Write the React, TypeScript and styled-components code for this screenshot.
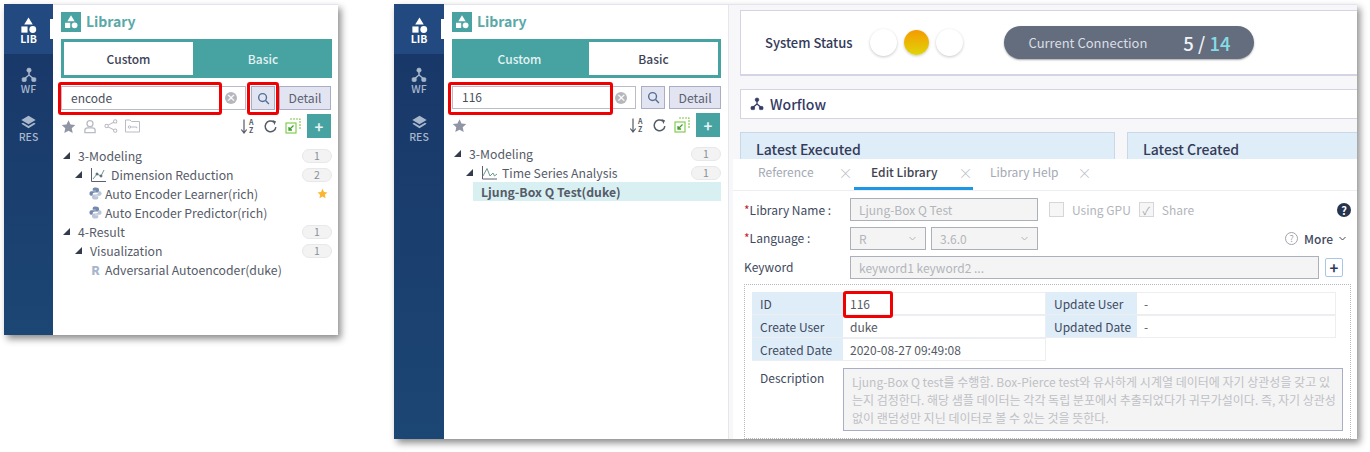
import * as React from 'react';
import styled, { createGlobalStyle } from 'styled-components';

const GlobalStyle = createGlobalStyle`
  html, body { margin: 0; padding: 0; background: #fff; }
  body { font-family: 'Noto Sans CJK KR', 'Noto Sans', sans-serif; color: #4a4f5c; overflow: hidden; }
  * { box-sizing: border-box; }
`;

const Page = styled.div`
  width: 1370px;
  height: 452px;
  padding: 4px 4px 0 4px;
  display: flex;
  align-items: flex-start;
  gap: 56px;
`;

const Shot = styled.div<{ $w: number; $h: number }>`
  position: relative;
  width: ${p => p.$w}px;
  height: ${p => p.$h}px;
  display: flex;
  flex: none;
  background: #fff;
  box-shadow: 3px 4px 7px rgba(0, 0, 0, 0.45);
`;

const Rail = styled.div<{ $w: number }>`
  width: ${p => p.$w}px;
  flex: none;
  background: linear-gradient(180deg, #183667 0%, #1c4674 100%);
  display: flex;
  flex-direction: column;
`;

const RailItem = styled.div<{ $active?: boolean }>`
  position: relative;
  height: ${p => (p.$active ? 50 : 48)}px;
  padding-top: ${p => (p.$active ? 12 : 13)}px;
  display: flex;
  flex-direction: column;
  align-items: center;
  font-size: 10.5px;
  line-height: 11px;
  font-weight: ${p => (p.$active ? 700 : 500)};
  color: ${p => (p.$active ? '#fff' : '#a9b7cc')};
  background: ${p => (p.$active ? '#224a80' : 'transparent')};
  svg { margin-bottom: ${p => (p.$active ? -2 : 0)}px; }
  &::after {
    content: '';
    display: ${p => (p.$active ? 'block' : 'none')};
    position: absolute;
    right: 0;
    top: 15px;
    width: 3px;
    height: 20px;
    background: #fff;
  }
`;

const LibPanel = styled.div<{ $w: number; $pr: number }>`
  width: ${p => p.$w}px;
  flex: none;
  padding: 7px ${p => p.$pr}px 0 8px;
  background: #fff;
  border-top: 1px solid #e3e5ee;
`;

const TitleRow = styled.div`
  display: flex;
  align-items: center;
  gap: 5px;
  height: 20px;
`;

const TitleIcon = styled.span`
  width: 20px;
  height: 20px;
  display: flex;
  align-items: center;
  justify-content: center;
  background: #4aa3a3;
`;

const TitleText = styled.span`
  font-size: 14px;
  line-height: 18px;
  margin-top: -2px;
  font-weight: 700;
  color: #5aa8a8;
`;

const Tabs = styled.div`
  margin-top: 7px;
  height: 39px;
  display: flex;
  border: 3px solid #47a2a2;
  background: #47a2a2;
`;

const Tab = styled.div<{ $on: boolean; $w: number; $nudge: number }>`
  width: ${p => p.$w}px;
  flex: ${p => (p.$w ? 'none' : '1')};
  display: flex;
  align-items: center;
  justify-content: center;
  padding: 0 ${p => Math.max(-p.$nudge, 0)}px 0 ${p => Math.max(p.$nudge, 0)}px;
  font-size: 12px;
  font-weight: 500;
  color: ${p => (p.$on ? '#3d4356' : '#e4f2f2')};
  background: ${p => (p.$on ? '#fff' : '#47a2a2')};
`;

const SearchRow = styled.div<{ $h: number }>`
  margin-top: 8px;
  height: ${p => p.$h}px;
  display: flex;
  gap: 4px;
`;

const SearchBox = styled.div`
  width: 185px;
  margin-right: 1px;
  display: flex;
  align-items: center;
  justify-content: space-between;
  padding: 0 8px 2px 9px;
  border: 1px solid #b8bcc9;
  font-size: 12px;
  color: #4a4f5c;
`;

const ClearDot = styled.span`
  width: 12px;
  height: 12px;
  margin-top: 2px;
  border-radius: 50%;
  background: #b5b7bd;
  color: #fff;
  font-size: 10px;
  line-height: 12px;
  font-weight: 700;
  text-align: center;
`;

const IconBtn = styled.div`
  width: 24px;
  display: flex;
  align-items: center;
  justify-content: center;
  background: #e2e5f1;
  border: 1px solid #a9aec4;
`;

const DetailBtn = styled(IconBtn)`
  width: 52px;
  font-size: 12.2px;
  color: #5b6172;
`;

const Toolbar = styled.div`
  margin: 4px 1px 0 0;
  height: 24px;
  display: flex;
  align-items: center;
  gap: 7px;
`;

const ToolSpacer = styled.div`
  flex: 1;
`;

const AddBtn = styled.div`
  width: 24px;
  height: 24px;
  margin-left: -1px;
  display: flex;
  align-items: center;
  justify-content: center;
  background: #47a2a2;
  color: #e6f4f4;
  font-size: 15px;
  font-weight: 700;
`;

const Tree = styled.div<{ $top: number }>`
  margin-top: ${p => p.$top}px;
  display: flex;
  flex-direction: column;
`;

const TreeRow = styled.div<{ $indent: number; $sel?: boolean }>`
  height: 19px;
  display: flex;
  align-items: center;
  padding-left: ${p => p.$indent}px;
  font-size: 12.25px;
  color: #565b68;
  font-weight: ${p => (p.$sel ? 700 : 400)};
  background: ${p => (p.$sel ? '#d9f0f2' : 'transparent')};
  margin-left: ${p => (p.$sel ? 21 : 0)}px;
`;

const Caret = styled.span`
  width: 0;
  height: 0;
  margin-right: 8px;
  border-style: solid;
  border-width: 0 0 7px 7px;
  border-color: transparent transparent #333b4d transparent;
`;

const RowIcon = styled.span<{ $mr: number }>`
  width: 17px;
  margin-right: ${p => p.$mr}px;
  display: flex;
  justify-content: center;
  align-items: center;
  color: #a9b5cc;
  font-weight: 800;
  font-size: 12px;
`;

const Grow = styled.span`
  flex: 1;
  white-space: nowrap;
`;

const Count = styled.span`
  width: 30px;
  height: 14px;
  flex: none;
  border-radius: 7px;
  background: #f3f3f4;
  border: 1px solid #e8e8ea;
  font-size: 10.5px;
  line-height: 12px;
  text-align: center;
  color: #8b8f98;
`;

const Fav = styled.span`
  width: 30px;
  flex: none;
  display: flex;
  justify-content: flex-end;
  padding-right: 4px;
`;

const Marker = styled.div<{ $x: number; $y: number; $w: number; $h: number }>`
  position: absolute;
  left: ${p => p.$x}px;
  top: ${p => p.$y}px;
  width: ${p => p.$w}px;
  height: ${p => p.$h}px;
  border: 3px solid #f00000;
  border-radius: 3px;
  z-index: 5;
`;

const Main = styled.div`
  position: relative;
  flex: 1;
  padding: 5px 0 0 11px;
  background: #f7f7f9;
  border-top: 1px solid #e3e5ee;
  border-left: 1px solid #e6e6ec;
  overflow: hidden;
`;

const StatusCard = styled.div`
  height: 66px;
  padding: 0 0 0 24px;
  display: flex;
  align-items: center;
  background: #fff;
  border: 1px solid #d3d5e4;
  border-right: none;
  border-bottom-width: 2px;
  font-size: 13px;
  font-weight: 500;
  color: #343a57;
`;

const Lamp = styled.span<{ $on?: boolean }>`
  width: ${p => (p.$on ? 25 : 27)}px;
  height: ${p => (p.$on ? 25 : 27)}px;
  border-radius: 50%;
  background: ${p => (p.$on ? 'linear-gradient(180deg, #f59a00, #e0d50a)' : '#fff')};
  box-shadow: 0 1px 3px rgba(0, 0, 0, 0.22);
  margin-left: 7px;
  &:first-of-type { margin-left: 18px; }
`;

const Pill = styled.div`
  margin-left: 41px;
  width: 250px;
  height: 33px;
  border-radius: 17px;
  background: #646d7d;
  box-shadow: 0 1px 2px rgba(0, 0, 0, 0.35);
  padding: 0 24px;
  display: flex;
  align-items: center;
  justify-content: space-between;
  color: #d9dee6;
  font-size: 13px;
  font-weight: 400;
`;

const PillCount = styled.span`
  font-size: 18.5px;
  font-weight: 500;
  color: #f1f3f6;
  b { font-weight: 500; color: #86dce6; }
`;

const FlowCard = styled.div`
  margin-top: 13px;
  height: 30px;
  padding-left: 9px;
  display: flex;
  align-items: center;
  gap: 6px;
  background: #fff;
  border: 1px solid #d3d5e4;
  border-right: none;
  font-size: 14px;
  font-weight: 500;
  color: #343a65;
`;

const LatestRow = styled.div`
  margin-top: 13px;
  display: flex;
  gap: 12px;
`;

const LatestCard = styled.div`
  width: 375px;
  flex: none;
  height: 60px;
  padding: 6px 15px;
  background: #deedf8;
  border: 1px solid #c9d7e8;
  font-size: 14px;
  line-height: 20px;
  font-weight: 500;
  color: #343a57;
`;

const LatestCardWide = styled(LatestCard)`
  width: 280px;
`;

const EditPanel = styled.div`
  position: absolute;
  left: 4px;
  top: 154px;
  right: 0;
  bottom: 0;
  background: #fff;
`;

const TabBar = styled.div`
  height: 32px;
  display: flex;
  padding-left: 25px;
  border-bottom: 1px solid #eceef2;
  font-size: 12px;
`;

const PanelTab = styled.div<{ $on?: boolean; $w: number; $gap: number; $pl: number }>`
  width: ${p => p.$w}px;
  flex: none;
  display: flex;
  align-items: center;
  gap: ${p => p.$gap}px;
  padding: 0 0 3px ${p => p.$pl}px;
  white-space: nowrap;
  font-weight: ${p => (p.$on ? 500 : 400)};
  color: ${p => (p.$on ? '#3f4350' : '#a4a9b4')};
  border-bottom: 3px solid ${p => (p.$on ? '#1e96e6' : 'transparent')};
`;

const TabClose = styled.span`
  color: #b8bcc4;
  font-size: 14px;
  font-weight: 300;
  line-height: 12px;
`;

const Form = styled.div`
  padding: 7px 6px 0 11px;
  display: flex;
  flex-direction: column;
  gap: 6px;
  font-size: 12px;
  color: #3f4a60;
`;

const FormRow = styled.div`
  height: 23px;
  display: flex;
  align-items: center;
`;

const FormLabel = styled.div<{ $up?: number }>`
  width: 106px;
  flex: none;
  padding-bottom: ${p => p.$up ?? 0}px;
  em { color: #c01f2c; font-style: normal; }
`;

const Field = styled.div<{ $w?: number }>`
  width: ${p => (p.$w ? `${p.$w}px` : 'auto')};
  flex: ${p => (p.$w ? 'none' : '1')};
  height: 23px;
  padding: 0 9px 0 8px;
  display: flex;
  align-items: center;
  justify-content: space-between;
  background: #f4f4f4;
  border: 1px solid #abb0bb;
  color: #b2b5bb;
  font-size: 12px;
`;

const SmallGap = styled.div`
  width: 5px;
  flex: none;
`;

const CheckBox = styled.span`
  width: 15px;
  height: 15px;
  margin: 0 8px 0 11px;
  display: flex;
  align-items: center;
  justify-content: center;
  border: 1px solid #d4d6da;
  background: #f6f6f6;
  color: #a5a8ae;
  font-size: 11px;
`;

const CheckLabel = styled.span`
  color: #b2b5bb;
  margin-right: -3px;
`;

const HelpRound = styled.span`
  margin-left: auto;
  width: 14px;
  height: 14px;
  border-radius: 50%;
  background: #27344e;
  color: #fff;
  font-weight: 700;
  font-size: 11px;
  line-height: 14px;
  text-align: center;
`;

const MoreLink = styled.span`
  margin-left: auto;
  margin-right: 5px;
  display: flex;
  align-items: center;
  gap: 6px;
  font-weight: 500;
  color: #3f4a60;
`;

const HollowHelp = styled.span`
  width: 13px;
  height: 13px;
  border-radius: 50%;
  border: 1px solid #a0a4ac;
  color: #a0a4ac;
  font-size: 9px;
  line-height: 11px;
  text-align: center;
  font-weight: 400;
`;

const PlusBtn = styled.div`
  width: 18px;
  height: 19px;
  margin: 0 8px 0 6px;
  flex: none;
  display: flex;
  align-items: center;
  justify-content: center;
  border: 1.5px solid #a9c6e6;
  border-radius: 2px;
  color: #2f3b66;
  font-size: 15px;
  font-weight: 700;
`;

const Dotted = styled.div`
  margin-top: -1px;
  padding: 7px 0 0 7px;
  height: 155px;
  border: 1px dotted #b5b8be;
`;

const InfoGrid = styled.div`
  display: grid;
  grid-template-columns: 91px 203px 91px 199px;
  grid-template-rows: 23px 23px 23px;
  font-size: 12px;
`;

const Th = styled.div`
  display: flex;
  align-items: center;
  padding-left: 8px;
  background: #deedf8;
  border-bottom: 1px solid #eceef2;
  color: #3f4a60;
  white-space: nowrap;
`;

const Td = styled.div`
  display: flex;
  align-items: center;
  padding-left: 7px;
  border: 1px solid #eceef2;
  border-left: none;
  color: #555a66;
`;

const DescRow = styled.div`
  display: flex;
  margin-top: 7px;
`;

const DescLabel = styled.div`
  width: 91px;
  flex: none;
  padding: 1px 0 0 8px;
  color: #3f4a60;
`;

const DescBox = styled.div`
  width: 500px;
  height: 63px;
  padding: 4px 5px 0 8px;
  background: #f4f4f4;
  border: 1px solid #a9aec4;
  color: #bfc1c6;
  font-size: 12px;
  line-height: 18px;
  word-break: break-all;
  overflow: hidden;
`;

const LibIcon = ({ size, color }: { size: number; color: string }) => (
  <svg width={size} height={size} viewBox="0 0 20 20" fill={color}>
    <path d="M10 1.500 14.500 9h-9z" />
    <rect x="2.500" y="11" width="6.500" height="6.500" />
    <circle cx="14.500" cy="14.200" r="3.600" />
  </svg>
);

const FlowIcon = ({ size, color }: { size: number; color: string }) => (
  <svg width={size} height={size} viewBox="0 0 20 20" fill={color} stroke={color}>
    <circle cx="10" cy="4" r="2.600" />
    <rect x="1.500" y="13.500" width="5" height="4.500" rx="1" />
    <rect x="13.500" y="13.500" width="5" height="4.500" rx="1" />
    <path d="M10 6v5M10 10 4 15M10 10l6 5" strokeWidth="1.800" fill="none" />
  </svg>
);

const LayersIcon = () => (
  <svg width="17" height="16" viewBox="0 0 20 19" fill="#a9b7cc">
    <path d="M10 1 18.500 6 10 11 1.500 6z" />
    <path d="M3.500 9.200 10 13l6.500-3.800 2 1.300L10 15.600 1.500 10.500z" />
  </svg>
);

const StarIcon = ({ color, size }: { color: string; size: number }) => (
  <svg width={size} height={size} viewBox="0 0 20 20" fill={color}>
    <path d="M10 1.500 12.700 7.400l6.300.7-4.700 4.300 1.300 6.300L10 15.600l-5.600 3.100 1.300-6.300L1 8.100l6.300-.7z" />
  </svg>
);

const SearchIcon = () => (
  <svg width="13" height="13" viewBox="0 0 14 14" fill="none" stroke="#4f6f96" strokeWidth="1.500">
    <circle cx="6" cy="6" r="4.200" />
    <path d="m9.200 9.200 3.600 3.600" />
  </svg>
);

const UserIcon = () => (
  <svg width="14" height="15" viewBox="0 0 15 16" fill="none" stroke="#b9bcc4" strokeWidth="1.400">
    <circle cx="7.500" cy="5" r="3.200" />
    <path d="M2 14.500V12c0-1.600 1.600-2.600 3-2.600h5c1.400 0 3 1 3 2.600v2.500z" />
  </svg>
);

const ShareIcon = () => (
  <svg width="14" height="14" viewBox="0 0 15 15" fill="none" stroke="#b9bcc4" strokeWidth="1.100">
    <circle cx="2.800" cy="7.500" r="1.800" />
    <circle cx="12" cy="2.600" r="1.800" />
    <circle cx="12" cy="12.400" r="1.800" />
    <path d="m4.400 6.600 6-3.100M4.400 8.400l6 3.100" />
  </svg>
);

const KeyFolderIcon = () => (
  <svg width="15" height="14" viewBox="0 0 15 14" fill="none" stroke="#b9bcc4" strokeWidth="1">
    <path d="M.5 1h4.500l1.500 1.500h8V13H.5z" />
    <circle cx="4.500" cy="8" r="1.200" />
    <path d="M5.800 8h6v1.200" />
  </svg>
);

const SortIcon = () => (
  <svg width="16" height="17" viewBox="0 0 16 17" fill="none" stroke="#555b66" strokeWidth="1.200">
    <path d="M4 1.500v13M1.300 11.500 4 15l2.700-3.500" />
    <text x="9" y="7" fontSize="7" fontWeight="700" fill="#555b66" stroke="none">A</text>
    <text x="9" y="15" fontSize="7" fontWeight="700" fill="#555b66" stroke="none">Z</text>
  </svg>
);

const RefreshIcon = () => (
  <svg width="15" height="15" viewBox="0 0 14 14" fill="none" stroke="#555b66" strokeWidth="1.400">
    <path d="M12 7.500A5 5 0 1 1 10.200 3" />
    <path d="M9 .9 12.200 2.400 10.600 5.600z" fill="#555b66" stroke="none" />
  </svg>
);

const CopyGreenIcon = () => (
  <svg width="16" height="16" viewBox="0 0 16 16" fill="none" stroke="#79c943" strokeWidth="1.100">
    <path d="M5 1h10v10" strokeDasharray="2 1" />
    <rect x="1" y="5" width="10" height="10" fill="#fff" />
    <path d="M8.500 7.500 4 12M4 9v3h3" stroke="#3fa12b" strokeWidth="1.300" />
  </svg>
);

const PythonIcon = () => (
  <svg width="13" height="13" viewBox="0 0 14 14">
    <path d="M7 .5C4 .5 4 1.800 4 3v1h3.300v.6H2.400C1 4.600.5 5.800.5 7s.5 2.500 1.900 2.500H4V8c0-1.200 1-2 2.200-2H9c1 0 1.800-.8 1.800-1.800V3C10.800 1.400 9.500.5 7 .5z" fill="#7288ac" />
    <path d="M7 13.500c3 0 3-1.300 3-2.500v-1H6.700v-.6h4.900C13 9.400 13.500 8.200 13.500 7s-.5-2.500-1.900-2.500H10V6c0 1.200-1 2-2.200 2H5c-1 0-1.800.8-1.800 1.800V11c0 1.600 1.300 2.500 3.800 2.500z" fill="#bcc6d6" />
  </svg>
);

const ScatterIcon = () => (
  <svg width="17" height="16" viewBox="0 0 17 16" fill="none" stroke="#5a6070" strokeWidth="1">
    <path d="M1.500 1v13.500H16" />
    <path d="m3 12 4-5 4 2 3-6" stroke="#6b9a8e" />
    <circle cx="7" cy="7" r="1" fill="#6b9a8e" />
    <circle cx="11" cy="9" r="1" fill="#6b9a8e" />
  </svg>
);

const WaveIcon = () => (
  <svg width="17" height="16" viewBox="0 0 17 16" fill="none" stroke="#5a6070" strokeWidth="1">
    <path d="M1.500 1v13H16" />
    <path d="M2 11 6 3.500l3 7.500 3-3 1.500 3L16 9" stroke="#6b9a8e" />
  </svg>
);

const Chevron = ({ color }: { color: string }) => (
  <svg width="7" height="5" viewBox="0 0 7 5" fill="none" stroke={color} strokeWidth="1">
    <path d="m.5 1 3 3 3-3" />
  </svg>
);

const SideRail = ({ width }: { width: number }) => (
  <Rail $w={width}>
    <RailItem $active>
      <LibIcon size={19} color="#fff" />
      LIB
    </RailItem>
    <RailItem>
      <FlowIcon size={16} color="#a9b7cc" />
      WF
    </RailItem>
    <RailItem>
      <LayersIcon />
      RES
    </RailItem>
  </Rail>
);

interface HeadProps {
  query: string;
  active: 'Custom' | 'Basic';
  fullTools: boolean;
  rowHeight: number;
}

const LibraryHead = ({ query, active, fullTools, rowHeight }: HeadProps) => (
  <>
    <TitleRow>
      <TitleIcon>
        <LibIcon size={16} color="#fff" />
      </TitleIcon>
      <TitleText>Library</TitleText>
    </TitleRow>
    <Tabs>
      <Tab $on={active === 'Custom'} $w={active === 'Custom' ? 129 : 134} $nudge={active === 'Custom' ? 0 : -5}>Custom</Tab>
      <Tab $on={active === 'Basic'} $w={0} $nudge={active === 'Custom' ? 4 : 0}>Basic</Tab>
    </Tabs>
    <SearchRow $h={rowHeight}>
      <SearchBox>
        {query}
        <ClearDot>×</ClearDot>
      </SearchBox>
      <IconBtn>
        <SearchIcon />
      </IconBtn>
      <DetailBtn>Detail</DetailBtn>
    </SearchRow>
    <Toolbar>
      <StarIcon color="#8f95a5" size={15} />
      {fullTools && (
        <>
          <UserIcon />
          <ShareIcon />
          <KeyFolderIcon />
        </>
      )}
      <ToolSpacer />
      <SortIcon />
      <RefreshIcon />
      <CopyGreenIcon />
      <AddBtn>+</AddBtn>
    </Toolbar>
  </>
);

export default function App() {
  return (
    <Page>
      <GlobalStyle />
      <Shot $w={334} $h={331}>
        <SideRail width={49} />
        <LibPanel $w={285} $pr={6}>
          <LibraryHead query="encode" active="Custom" fullTools rowHeight={24} />
          <Tree $top={8}>
            <TreeRow $indent={2}>
              <Caret />
              <Grow>3-Modeling</Grow>
              <Count>1</Count>
            </TreeRow>
            <TreeRow $indent={14}>
              <Caret />
              <RowIcon $mr={4}><ScatterIcon /></RowIcon>
              <Grow>Dimension Reduction</Grow>
              <Count>2</Count>
            </TreeRow>
            <TreeRow $indent={26}>
              <RowIcon $mr={1}><PythonIcon /></RowIcon>
              <Grow>Auto Encoder Learner(rich)</Grow>
              <Fav><StarIcon color="#fbb531" size={11} /></Fav>
            </TreeRow>
            <TreeRow $indent={26}>
              <RowIcon $mr={1}><PythonIcon /></RowIcon>
              <Grow>Auto Encoder Predictor(rich)</Grow>
            </TreeRow>
            <TreeRow $indent={2}>
              <Caret />
              <Grow>4-Result</Grow>
              <Count>1</Count>
            </TreeRow>
            <TreeRow $indent={14}>
              <Caret />
              <Grow>Visualization</Grow>
              <Count>1</Count>
            </TreeRow>
            <TreeRow $indent={26}>
              <RowIcon $mr={1}>R</RowIcon>
              <Grow>Adversarial Autoencoder(duke)</Grow>
            </TreeRow>
          </Tree>
        </LibPanel>
        <Marker $x={54} $y={78} $w={164} $h={33} />
        <Marker $x={243} $y={78} $w={32} $h={33} />
      </Shot>
      <Shot $w={963} $h={435}>
        <SideRail width={50} />
        <LibPanel $w={284} $pr={7}>
          <LibraryHead query="116" active="Basic" fullTools={false} rowHeight={23} />
          <Tree $top={7}>
            <TreeRow $indent={2}>
              <Caret />
              <Grow>3-Modeling</Grow>
              <Count>1</Count>
            </TreeRow>
            <TreeRow $indent={14}>
              <Caret />
              <RowIcon $mr={4}><WaveIcon /></RowIcon>
              <Grow>Time Series Analysis</Grow>
              <Count>1</Count>
            </TreeRow>
            <TreeRow $indent={8} $sel>Ljung-Box Q Test(duke)</TreeRow>
          </Tree>
        </LibPanel>
        <Main>
          <StatusCard>
            System Status
            <Lamp />
            <Lamp $on />
            <Lamp />
            <Pill>
              Current Connection
              <PillCount>5 / <b>14</b></PillCount>
            </Pill>
          </StatusCard>
          <FlowCard>
            <FlowIcon size={14} color="#343a65" />
            Worflow
          </FlowCard>
          <LatestRow>
            <LatestCard>Latest Executed</LatestCard>
            <LatestCardWide>Latest Created</LatestCardWide>
          </LatestRow>
          <EditPanel>
            <TabBar>
              <PanelTab $w={96} $gap={25} $pl={0}>Reference<TabClose>×</TabClose></PanelTab>
              <PanelTab $on $w={119} $gap={21} $pl={17}>Edit Library<TabClose>×</TabClose></PanelTab>
              <PanelTab $w={110} $gap={19} $pl={17}>Library Help<TabClose>×</TabClose></PanelTab>
            </TabBar>
            <Form>
              <FormRow>
                <FormLabel><em>*</em>Library Name :</FormLabel>
                <Field $w={188}>Ljung-Box Q Test</Field>
                <CheckBox />
                <CheckLabel>Using GPU</CheckLabel>
                <CheckBox>✓</CheckBox>
                <CheckLabel>Share</CheckLabel>
                <HelpRound>?</HelpRound>
              </FormRow>
              <FormRow>
                <FormLabel $up={2}><em>*</em>Language :</FormLabel>
                <Field $w={76}>R <Chevron color="#b2b5bb" /></Field>
                <SmallGap />
                <Field $w={107}>3.6.0 <Chevron color="#b2b5bb" /></Field>
                <MoreLink><HollowHelp>?</HollowHelp>More <Chevron color="#3f4a60" /></MoreLink>
              </FormRow>
              <FormRow>
                <FormLabel $up={3}>Keyword</FormLabel>
                <Field>keyword1 keyword2 ...</Field>
                <PlusBtn>+</PlusBtn>
              </FormRow>
              <Dotted>
                <InfoGrid>
                  <Th>ID</Th>
                  <Td>116</Td>
                  <Th>Update User</Th>
                  <Td>-</Td>
                  <Th>Create User</Th>
                  <Td>duke</Td>
                  <Th>Updated Date</Th>
                  <Td>-</Td>
                  <Th>Created Date</Th>
                  <Td>2020-08-27 09:49:08</Td>
                </InfoGrid>
                <DescRow>
                  <DescLabel>Description</DescLabel>
                  <DescBox>
                    Ljung-Box Q test를 수행함. Box-Pierce test와 유사하게 시계열 데이터에 자기 상관성을 갖고 있는지 검정한다. 해당 샘플 데이터는 각각 독립 분포에서 추출되었다가 귀무가설이다. 즉, 자기 상관성 없이 랜덤성만 지닌 데이터로 볼 수 있는 것을 뜻한다.
                  </DescBox>
                </DescRow>
              </Dotted>
            </Form>
          </EditPanel>
        </Main>
        <Marker $x={54} $y={78} $w={165} $h={33} />
        <Marker $x={449} $y={287} $w={50} $h={27} />
      </Shot>
    </Page>
  );
}
